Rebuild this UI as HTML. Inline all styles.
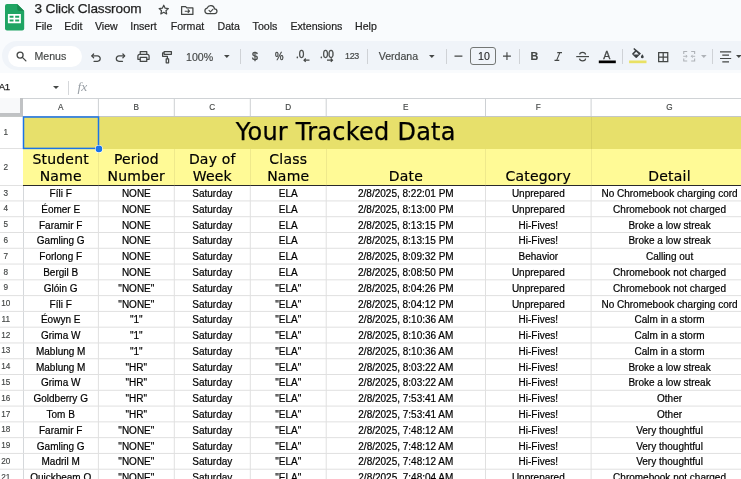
<!DOCTYPE html>
<html lang="en">
<head>
<meta charset="utf-8">
<title>3 Click Classroom</title>
<style>
*{box-sizing:border-box;margin:0;padding:0}
html,body{width:741px;height:479px;overflow:hidden;background:#f9fbfd}
body{will-change:transform}
body{position:relative;font-family:"Liberation Sans",Arial,sans-serif;color:#1f1f1f}
.abs{position:absolute}
#title{-webkit-text-stroke:0.25px #1f1f1f;position:absolute;left:34.5px;top:1px;font-size:13.6px;line-height:16px;color:#1f1f1f;white-space:nowrap;letter-spacing:-0.15px}
.menu{-webkit-text-stroke:0.2px #1f1f1f;position:absolute;top:19px;font-size:10.6px;line-height:14px;color:#1f1f1f;white-space:nowrap}
#tb{position:absolute;left:1.5px;top:41px;width:760px;height:29.4px;border-radius:14.7px;background:#f0f4f9}
#search{position:absolute;left:7.5px;top:45.5px;width:74.5px;height:21px;border-radius:10.5px;background:#fff}
.tt{-webkit-text-stroke:0.15px #444746;position:absolute;font-size:10.4px;line-height:12px;color:#444746;white-space:nowrap}
.md{-webkit-text-stroke:0.35px #444746}
.sep{position:absolute;top:48.5px;width:1px;height:15px;background:#cfd2d6}
svg{position:absolute;overflow:visible}
#fbar{position:absolute;left:0;top:72.5px;width:741px;height:26px;background:#fff}
#grid{position:absolute;left:0;top:98px;width:741px;height:381px;background:#fff}
.ch{-webkit-text-stroke:0.15px #444746;position:absolute;top:98.5px;height:17.5px;line-height:17.5px;text-align:center;font-size:8.2px;color:#444746}
.rn{-webkit-text-stroke:0.15px #444746;position:absolute;left:-6px;width:23.5px;text-align:center;font-size:8.2px;color:#444746}
.hl{position:absolute;left:0;width:741px;height:1px;background:#e1e1e1}
.vl{position:absolute;width:1px;background:#e1e1e1}
.c{-webkit-text-stroke:0.2px #000;position:absolute;height:15.78px;line-height:16.6px;text-align:center;font-size:10px;color:#000;white-space:nowrap;overflow:hidden}
.h2{-webkit-text-stroke:0.2px #000;position:absolute;font-family:"DejaVu Sans",Verdana,sans-serif;color:#000;text-align:center;font-size:14px;line-height:17px;white-space:nowrap;letter-spacing:0.2px}
</style>
</head>
<body>
<!-- logo -->
<svg style="left:4.6px;top:3.7px" width="19.2" height="26.4" viewBox="0 0 19.2 26.4">
  <path d="M2 0h10.2l7 7v17.4a2 2 0 0 1-2 2H2a2 2 0 0 1-2-2V2a2 2 0 0 1 2-2z" fill="#1fa463"/>
  <path d="M12.2 0l7 7h-5a2 2 0 0 1-2-2z" fill="#188a50"/>
  <path d="M3.2 10.4h13v9.3h-13z M4.9 12.1v2.1h3.9v-2.1z M10.500 12.100v2.100h4v-2.100z M4.900 15.900v2.100h3.900v-2.100z M10.500 15.900v2.100h4v-2.100z" fill="#fff" fill-rule="evenodd" transform="translate(-0.300,-0.400)"/>
</svg>
<div id="title">3 Click Classroom</div>
<!-- star -->
<svg style="left:157.5px;top:4.2px" width="11.5" height="11" viewBox="0 0 24 23" fill="none" stroke="#444746" stroke-width="2.5" stroke-linejoin="round">
  <path d="M12 2.5l2.9 6.3 6.8.7-5.1 4.6 1.5 6.7L12 17.3l-6.1 3.5 1.5-6.7L2.3 9.5l6.8-.7z"/>
</svg>
<!-- folder move -->
<svg style="left:181px;top:5.6px" width="12.5" height="9" viewBox="0 0 25 18" fill="none" stroke="#444746" stroke-width="2.5" stroke-linejoin="round">
  <path d="M1.2 1.2h8l2.4 2.6h12.2v13H1.2z"/>
  <path d="M7.5 10.4h9M13.6 6.9l3.4 3.5-3.4 3.5" stroke-width="2.3"/>
</svg>
<!-- cloud -->
<svg style="left:204px;top:5.4px" width="14" height="9.2" viewBox="0 0 28 18.4" fill="none" stroke="#444746" stroke-width="2.5" stroke-linejoin="round" stroke-linecap="round">
  <path d="M7 17.2a5.6 5.6 0 0 1-.6-11.1A7.6 7.6 0 0 1 21 7.6a4.8 4.8 0 0 1 .3 9.6z"/>
  <path d="M10 10.8l2.8 2.8 5-5" stroke-width="2.3"/>
</svg>
<div class="menu" style="left:35.3px">File</div>
<div class="menu" style="left:64.3px">Edit</div>
<div class="menu" style="left:95px">View</div>
<div class="menu" style="left:130.2px">Insert</div>
<div class="menu" style="left:170.7px">Format</div>
<div class="menu" style="left:217.5px">Data</div>
<div class="menu" style="left:252.6px">Tools</div>
<div class="menu" style="left:290.5px">Extensions</div>
<div class="menu" style="left:355px">Help</div>

<!-- toolbar -->
<div id="tb"></div>
<div id="search"></div>
<svg style="left:15.5px;top:50.5px" width="11" height="11" viewBox="0 0 22 22" fill="none" stroke="#444746" stroke-width="2.6" stroke-linecap="round">
  <circle cx="8.2" cy="8.2" r="6"/><path d="M12.8 12.8l7 7"/>
</svg>
<div class="tt" style="left:34.5px;top:50px;font-size:10.6px">Menus</div>
<!-- undo -->
<svg style="left:90.5px;top:52.5px" width="10.5" height="9" viewBox="0 0 21 18" fill="none" stroke="#444746" stroke-width="2.5" stroke-linecap="round" stroke-linejoin="round">
  <path d="M5.2 2L1.6 5.8l3.6 3.8"/><path d="M2 5.8h11a5.4 5.4 0 0 1 0 10.8H6"/>
</svg>
<!-- redo -->
<svg style="left:114.5px;top:52.5px" width="10.5" height="9" viewBox="0 0 21 18" fill="none" stroke="#444746" stroke-width="2.5" stroke-linecap="round" stroke-linejoin="round">
  <path d="M15.8 2l3.6 3.8-3.6 3.8"/><path d="M19 5.8H8a5.4 5.4 0 0 0 0 10.8h7"/>
</svg>
<!-- print -->
<svg style="left:137px;top:51.3px" width="13" height="11" viewBox="0 0 26 22" fill="none" stroke="#444746" stroke-width="2.5" stroke-linejoin="round">
  <path d="M6.5 6.5V1.2h13v5.3"/><path d="M6.5 16.5H1.8v-6.2a3.8 3.8 0 0 1 3.8-3.8h14.8a3.8 3.8 0 0 1 3.8 3.8v6.2h-4.7"/><path d="M6.5 12.6h13v8.2h-13z"/>
</svg>
<!-- paint roller -->
<svg style="left:161.5px;top:50.8px" width="11" height="12.5" viewBox="0 0 22 25" fill="none" stroke="#444746" stroke-width="2.5" stroke-linejoin="round">
  <path d="M4.2 1.2h14.6v5.4H4.2z"/><path d="M4.2 3.9H1.2v6.8h9.6v5.2"/><path d="M8.4 15.9h4.8v7.6H8.4z"/>
</svg>
<div class="tt" style="left:186px;top:50.5px;font-size:10.6px">100%</div>
<svg style="left:224px;top:55.2px" width="5.6" height="3" viewBox="0 0 10 5"><path d="M0 0h10L5 5z" fill="#444746"/></svg>
<div class="sep" style="left:239.8px"></div>
<div class="tt md" style="left:252px;top:50px;font-size:10.6px">$</div>
<div class="tt md" style="left:274.8px;top:51px;font-size:10.2px;transform:scaleX(.94);transform-origin:0 0">%</div>
<div class="tt md" style="left:296px;top:49px;font-size:10px">.0</div>
<svg style="left:302.7px;top:58.4px" width="6.5" height="4.4" viewBox="0 0 13 8.8" fill="none" stroke="#444746" stroke-width="2.3"><path d="M13 4.4H2M5.4 1L2 4.4l3.400 3.400"/></svg>
<div class="tt md" style="left:320px;top:49px;font-size:10px;letter-spacing:-0.1px">.00</div>
<svg style="left:326.5px;top:58.4px" width="6.5" height="4.4" viewBox="0 0 13 8.8" fill="none" stroke="#444746" stroke-width="2.3"><path d="M0 4.4h11M7.600 1L11 4.4 7.600 7.800"/></svg>
<div class="tt" style="left:344.5px;top:50.2px;font-size:9.9px;letter-spacing:-0.3px;transform:scaleX(.9);transform-origin:0 0;-webkit-text-stroke:0.2px #444746">123</div>
<div class="sep" style="left:366.7px"></div>
<div class="tt" style="left:378.7px;top:50px;font-size:10.6px">Verdana</div>
<svg style="left:429.4px;top:55.2px" width="5.6" height="3" viewBox="0 0 10 5"><path d="M0 0h10L5 5z" fill="#444746"/></svg>
<div class="sep" style="left:446.2px"></div>
<svg style="left:0;top:0" width="741" height="80" viewBox="0 0 741 80" stroke="#444746" stroke-width="1.150" fill="none"><path d="M454.500 56.100h7.900M503 56.100h7.900M506.950 52.150v7.900"/></svg>
<div class="abs" style="left:470.4px;top:47.2px;width:25.2px;height:17.4px;border:1px solid #747775;border-radius:3px"></div>
<div class="tt" style="left:478px;top:50px;font-size:10.6px;color:#1f1f1f">10</div>

<div class="sep" style="left:519.2px"></div>
<div class="tt" style="left:530.6px;top:50px;font-size:10.8px;font-weight:bold">B</div>
<!-- italic -->
<svg style="left:554px;top:51.8px" width="8.5" height="9" viewBox="0 0 17 18" fill="none" stroke="#444746" stroke-width="2.2"><path d="M6.500 1.200h9.500M1 16.800h9.500M11.800 1.200L5.200 16.800"/></svg>
<!-- strikethrough -->
<svg style="left:576px;top:51px" width="13" height="11" viewBox="0 0 13 11" fill="none" stroke="#444746" stroke-width="1.15"><path d="M0.200 5.600h12.800"/><path d="M9.600 3.600c-.2-1.400-1.400-2.300-3-2.300-1.700 0-2.900.9-2.900 2.200"/><path d="M3.500 7.600c.2 1.400 1.400 2.300 3.100 2.300 1.700 0 3-.9 3-2.300"/></svg>
<!-- text color -->
<div class="tt" style="left:603.2px;top:48.900px;font-size:10.6px;color:#444746;-webkit-text-stroke:0.3px #444746">A</div>
<svg style="left:0;top:0" width="741" height="80" viewBox="0 0 741 80"><rect x="598.800" y="60.500" width="17" height="2.700" fill="#000"/><rect x="629.100" y="60.500" width="17.400" height="2.700" fill="#e9e164"/></svg>
<div class="sep" style="left:622px"></div>
<!-- fill color -->
<svg style="left:632px;top:48.200px" width="12" height="10.500" viewBox="0 0 12 10.500">
  <path d="M2.200 0.100L1.300 1l1.700 1.700L0.400 5.300a.8.800 0 0 0 0 1.100l3.300 3.300a.8.800 0 0 0 1.100 0L9 5.500zM4.200 3.800l2.700 2.700H1.500z" fill="#3c4043" fill-rule="evenodd"/>
  <path d="M10.300 6.300s-1.400 1.600-1.400 2.600a1.400 1.400 0 0 0 2.800 0c0-1-1.400-2.600-1.400-2.600z" fill="#3c4043"/>
</svg>
<!-- borders -->
<svg style="left:658px;top:51.500px" width="10.400" height="10.300" viewBox="0 0 10.400 10.300" fill="none" stroke="#444746" stroke-width="1.250"><path d="M0.650 0.650h9.100v9H0.650zM5.200 0.650v9M0.650 5.150h9.100"/></svg>
<!-- merge (disabled) -->
<svg style="left:682.5px;top:51.3px" width="12.400" height="10.600" viewBox="0 0 24.800 21.200" fill="none" stroke="#aeb2b7" stroke-width="2.200"><path d="M8.400 1.100H1.500v5M16.400 1.100h6.900v5M8.400 20.100H1.500v-5M16.400 20.100h6.900v-5"/><path d="M0.500 10.600h7.500M5.500 7.800l2.800 2.800-2.800 2.800M24.300 10.600h-7.500M19.300 7.800l-2.800 2.800 2.800 2.800" stroke-width="1.900"/></svg>
<svg style="left:701.3px;top:55.2px" width="5.600" height="3" viewBox="0 0 10 5"><path d="M0 0h10L5 5z" fill="#aeb2b7"/></svg>
<div class="sep" style="left:712px"></div>
<!-- align center -->
<svg style="left:719.800px;top:51px" width="11.400" height="11" viewBox="0 0 11.400 11" fill="none" stroke="#444746" stroke-width="1.200"><path d="M0 0.900h11.200M2.300 4.200h6.700M0 7.500h11.200M2.300 10.800h6.700"/></svg>
<svg style="left:735.8px;top:55.2px" width="5.600" height="3" viewBox="0 0 10 5"><path d="M0 0h10L5 5z" fill="#444746"/></svg>

<!-- formula bar -->
<div id="fbar"></div>
<div class="abs" style="left:-1.2px;top:81px;font-size:9.6px;line-height:12px;color:#1f1f1f;letter-spacing:-0.5px;-webkit-text-stroke:0.25px #1f1f1f">A1</div>
<svg style="left:52.6px;top:86px" width="6" height="3.200" viewBox="0 0 10 5"><path d="M0 0h10L5 5z" fill="#444746"/></svg>
<div class="abs" style="left:68px;top:81px;width:1px;height:13.500px;background:#d5d7da"></div>
<div class="abs" style="left:77.5px;top:80.400px;font-family:'Liberation Serif',serif;font-style:italic;font-size:13.5px;line-height:13px;color:#9aa0a6;letter-spacing:0px">fx</div>

<!-- grid -->
<div id="grid"></div>
<div class="abs" style="left:0;top:98px;width:741px;height:1px;background:#d0d3d6"></div>
<div class="abs" style="left:0;top:115.500px;width:741px;height:1px;background:#c4c7c5"></div>
<!-- corner -->
<div class="abs" style="left:0;top:98px;width:23px;height:18.400px;background:#f8f9fa;border-right:3px solid #c0c2c4;border-bottom:3px solid #c0c2c4"></div>
<!-- row header separator line -->
<div class="abs" style="left:22.500px;top:117px;width:1px;height:362px;background:#d5d8db"></div>
<!-- row 1 -->
<div class="abs" style="left:23px;top:116.500px;width:718px;height:32px;background:#e7e06b"></div>
<div class="abs" style="left:590.600px;top:116.500px;width:1px;height:32px;background:#d9d263"></div>
<!-- row 2 -->
<div class="abs" style="left:23px;top:148.500px;width:718px;height:36.500px;background:#fffa96"></div>
<div class="abs" style="left:0;top:184.700px;width:741px;height:1.200px;background:#e1e1e1"></div>
<div class="abs" style="left:23px;top:184.700px;width:718px;height:1.200px;background:#2a2a2a"></div>
<div class="abs" style="left:0;top:148px;width:23px;height:1px;background:#e1e1e1"></div>

<div class="ch" style="left:23.0px;width:75.4px">A</div>
<div class="ch" style="left:98.4px;width:75.9px">B</div>
<div class="ch" style="left:174.3px;width:76.0px">C</div>
<div class="ch" style="left:250.3px;width:75.9px">D</div>
<div class="ch" style="left:326.2px;width:159.3px">E</div>
<div class="ch" style="left:485.5px;width:105.6px">F</div>
<div class="ch" style="left:591.1px;width:156.9px">G</div>
<svg style="left:0;top:0" width="741" height="479" viewBox="0 0 741 479" stroke="#cdd0d3" stroke-width="1" fill="none"><path d="M98.4 98.8V116"/><path d="M174.3 98.8V116"/><path d="M250.3 98.8V116"/><path d="M326.2 98.8V116"/><path d="M485.5 98.8V116"/><path d="M591.1 98.8V116"/></svg>
<div class="rn" style="top:116.50px;height:32.00px;line-height:32.00px">1</div>
<div class="rn" style="top:149.00px;height:37.00px;line-height:37.00px">2</div>
<div class="rn" style="top:185.65px;height:15.78px;line-height:15.78px">3</div>
<div class="rn" style="top:201.43px;height:15.78px;line-height:15.78px">4</div>
<div class="rn" style="top:217.21px;height:15.78px;line-height:15.78px">5</div>
<div class="rn" style="top:232.99px;height:15.78px;line-height:15.78px">6</div>
<div class="rn" style="top:248.77px;height:15.78px;line-height:15.78px">7</div>
<div class="rn" style="top:264.55px;height:15.78px;line-height:15.78px">8</div>
<div class="rn" style="top:280.33px;height:15.78px;line-height:15.78px">9</div>
<div class="rn" style="top:296.11px;height:15.78px;line-height:15.78px">10</div>
<div class="rn" style="top:311.89px;height:15.78px;line-height:15.78px">11</div>
<div class="rn" style="top:327.67px;height:15.78px;line-height:15.78px">12</div>
<div class="rn" style="top:343.45px;height:15.78px;line-height:15.78px">13</div>
<div class="rn" style="top:359.23px;height:15.78px;line-height:15.78px">14</div>
<div class="rn" style="top:375.01px;height:15.78px;line-height:15.78px">15</div>
<div class="rn" style="top:390.79px;height:15.78px;line-height:15.78px">16</div>
<div class="rn" style="top:406.57px;height:15.78px;line-height:15.78px">17</div>
<div class="rn" style="top:422.35px;height:15.78px;line-height:15.78px">18</div>
<div class="rn" style="top:438.13px;height:15.78px;line-height:15.78px">19</div>
<div class="rn" style="top:453.91px;height:15.78px;line-height:15.78px">20</div>
<div class="rn" style="top:469.69px;height:15.78px;line-height:15.78px">21</div>
<svg style="left:0;top:0" width="741" height="479" viewBox="0 0 741 479" stroke="#e0e0e0" stroke-width="1" fill="none"><path d="M0 200.93H741"/><path d="M0 216.71H741"/><path d="M0 232.49H741"/><path d="M0 248.27H741"/><path d="M0 264.05H741"/><path d="M0 279.83H741"/><path d="M0 295.61H741"/><path d="M0 311.39H741"/><path d="M0 327.17H741"/><path d="M0 342.95H741"/><path d="M0 358.73H741"/><path d="M0 374.51H741"/><path d="M0 390.29H741"/><path d="M0 406.07H741"/><path d="M0 421.85H741"/><path d="M0 437.63H741"/><path d="M0 453.41H741"/><path d="M0 469.19H741"/><path d="M0 484.97H741"/><path d="M98.4 185.8V479"/><path d="M174.3 185.8V479"/><path d="M250.3 185.8V479"/><path d="M326.2 185.8V479"/><path d="M485.5 185.8V479"/><path d="M591.1 185.8V479"/></svg>
<div class="c" style="left:23.0px;width:75.4px;top:186.05px">Fíli F</div>
<div class="c" style="left:98.4px;width:75.9px;top:186.05px">NONE</div>
<div class="c" style="left:174.3px;width:76.0px;top:186.05px">Saturday</div>
<div class="c" style="left:250.3px;width:75.9px;top:186.05px">ELA</div>
<div class="c" style="left:326.2px;width:159.3px;top:186.05px">2/8/2025, 8:22:01 PM</div>
<div class="c" style="left:485.5px;width:105.6px;top:186.05px">Unprepared</div>
<div class="c" style="left:591.1px;width:156.9px;top:186.05px">No Chromebook charging cord</div>
<div class="c" style="left:23.0px;width:75.4px;top:201.83px">Éomer E</div>
<div class="c" style="left:98.4px;width:75.9px;top:201.83px">NONE</div>
<div class="c" style="left:174.3px;width:76.0px;top:201.83px">Saturday</div>
<div class="c" style="left:250.3px;width:75.9px;top:201.83px">ELA</div>
<div class="c" style="left:326.2px;width:159.3px;top:201.83px">2/8/2025, 8:13:00 PM</div>
<div class="c" style="left:485.5px;width:105.6px;top:201.83px">Unprepared</div>
<div class="c" style="left:591.1px;width:156.9px;top:201.83px">Chromebook not charged</div>
<div class="c" style="left:23.0px;width:75.4px;top:217.61px">Faramir F</div>
<div class="c" style="left:98.4px;width:75.9px;top:217.61px">NONE</div>
<div class="c" style="left:174.3px;width:76.0px;top:217.61px">Saturday</div>
<div class="c" style="left:250.3px;width:75.9px;top:217.61px">ELA</div>
<div class="c" style="left:326.2px;width:159.3px;top:217.61px">2/8/2025, 8:13:15 PM</div>
<div class="c" style="left:485.5px;width:105.6px;top:217.61px">Hi-Fives!</div>
<div class="c" style="left:591.1px;width:156.9px;top:217.61px">Broke a low streak</div>
<div class="c" style="left:23.0px;width:75.4px;top:233.39px">Gamling G</div>
<div class="c" style="left:98.4px;width:75.9px;top:233.39px">NONE</div>
<div class="c" style="left:174.3px;width:76.0px;top:233.39px">Saturday</div>
<div class="c" style="left:250.3px;width:75.9px;top:233.39px">ELA</div>
<div class="c" style="left:326.2px;width:159.3px;top:233.39px">2/8/2025, 8:13:15 PM</div>
<div class="c" style="left:485.5px;width:105.6px;top:233.39px">Hi-Fives!</div>
<div class="c" style="left:591.1px;width:156.9px;top:233.39px">Broke a low streak</div>
<div class="c" style="left:23.0px;width:75.4px;top:249.17px">Forlong F</div>
<div class="c" style="left:98.4px;width:75.9px;top:249.17px">NONE</div>
<div class="c" style="left:174.3px;width:76.0px;top:249.17px">Saturday</div>
<div class="c" style="left:250.3px;width:75.9px;top:249.17px">ELA</div>
<div class="c" style="left:326.2px;width:159.3px;top:249.17px">2/8/2025, 8:09:32 PM</div>
<div class="c" style="left:485.5px;width:105.6px;top:249.17px">Behavior</div>
<div class="c" style="left:591.1px;width:156.9px;top:249.17px">Calling out</div>
<div class="c" style="left:23.0px;width:75.4px;top:264.95px">Bergil B</div>
<div class="c" style="left:98.4px;width:75.9px;top:264.95px">NONE</div>
<div class="c" style="left:174.3px;width:76.0px;top:264.95px">Saturday</div>
<div class="c" style="left:250.3px;width:75.9px;top:264.95px">ELA</div>
<div class="c" style="left:326.2px;width:159.3px;top:264.95px">2/8/2025, 8:08:50 PM</div>
<div class="c" style="left:485.5px;width:105.6px;top:264.95px">Unprepared</div>
<div class="c" style="left:591.1px;width:156.9px;top:264.95px">Chromebook not charged</div>
<div class="c" style="left:23.0px;width:75.4px;top:280.73px">Glóin G</div>
<div class="c" style="left:98.4px;width:75.9px;top:280.73px">"NONE"</div>
<div class="c" style="left:174.3px;width:76.0px;top:280.73px">Saturday</div>
<div class="c" style="left:250.3px;width:75.9px;top:280.73px">"ELA"</div>
<div class="c" style="left:326.2px;width:159.3px;top:280.73px">2/8/2025, 8:04:26 PM</div>
<div class="c" style="left:485.5px;width:105.6px;top:280.73px">Unprepared</div>
<div class="c" style="left:591.1px;width:156.9px;top:280.73px">Chromebook not charged</div>
<div class="c" style="left:23.0px;width:75.4px;top:296.51px">Fíli F</div>
<div class="c" style="left:98.4px;width:75.9px;top:296.51px">"NONE"</div>
<div class="c" style="left:174.3px;width:76.0px;top:296.51px">Saturday</div>
<div class="c" style="left:250.3px;width:75.9px;top:296.51px">"ELA"</div>
<div class="c" style="left:326.2px;width:159.3px;top:296.51px">2/8/2025, 8:04:12 PM</div>
<div class="c" style="left:485.5px;width:105.6px;top:296.51px">Unprepared</div>
<div class="c" style="left:591.1px;width:156.9px;top:296.51px">No Chromebook charging cord</div>
<div class="c" style="left:23.0px;width:75.4px;top:312.29px">Éowyn E</div>
<div class="c" style="left:98.4px;width:75.9px;top:312.29px">"1"</div>
<div class="c" style="left:174.3px;width:76.0px;top:312.29px">Saturday</div>
<div class="c" style="left:250.3px;width:75.9px;top:312.29px">"ELA"</div>
<div class="c" style="left:326.2px;width:159.3px;top:312.29px">2/8/2025, 8:10:36 AM</div>
<div class="c" style="left:485.5px;width:105.6px;top:312.29px">Hi-Fives!</div>
<div class="c" style="left:591.1px;width:156.9px;top:312.29px">Calm in a storm</div>
<div class="c" style="left:23.0px;width:75.4px;top:328.07px">Grima W</div>
<div class="c" style="left:98.4px;width:75.9px;top:328.07px">"1"</div>
<div class="c" style="left:174.3px;width:76.0px;top:328.07px">Saturday</div>
<div class="c" style="left:250.3px;width:75.9px;top:328.07px">"ELA"</div>
<div class="c" style="left:326.2px;width:159.3px;top:328.07px">2/8/2025, 8:10:36 AM</div>
<div class="c" style="left:485.5px;width:105.6px;top:328.07px">Hi-Fives!</div>
<div class="c" style="left:591.1px;width:156.9px;top:328.07px">Calm in a storm</div>
<div class="c" style="left:23.0px;width:75.4px;top:343.85px">Mablung M</div>
<div class="c" style="left:98.4px;width:75.9px;top:343.85px">"1"</div>
<div class="c" style="left:174.3px;width:76.0px;top:343.85px">Saturday</div>
<div class="c" style="left:250.3px;width:75.9px;top:343.85px">"ELA"</div>
<div class="c" style="left:326.2px;width:159.3px;top:343.85px">2/8/2025, 8:10:36 AM</div>
<div class="c" style="left:485.5px;width:105.6px;top:343.85px">Hi-Fives!</div>
<div class="c" style="left:591.1px;width:156.9px;top:343.85px">Calm in a storm</div>
<div class="c" style="left:23.0px;width:75.4px;top:359.63px">Mablung M</div>
<div class="c" style="left:98.4px;width:75.9px;top:359.63px">"HR"</div>
<div class="c" style="left:174.3px;width:76.0px;top:359.63px">Saturday</div>
<div class="c" style="left:250.3px;width:75.9px;top:359.63px">"ELA"</div>
<div class="c" style="left:326.2px;width:159.3px;top:359.63px">2/8/2025, 8:03:22 AM</div>
<div class="c" style="left:485.5px;width:105.6px;top:359.63px">Hi-Fives!</div>
<div class="c" style="left:591.1px;width:156.9px;top:359.63px">Broke a low streak</div>
<div class="c" style="left:23.0px;width:75.4px;top:375.41px">Grima W</div>
<div class="c" style="left:98.4px;width:75.9px;top:375.41px">"HR"</div>
<div class="c" style="left:174.3px;width:76.0px;top:375.41px">Saturday</div>
<div class="c" style="left:250.3px;width:75.9px;top:375.41px">"ELA"</div>
<div class="c" style="left:326.2px;width:159.3px;top:375.41px">2/8/2025, 8:03:22 AM</div>
<div class="c" style="left:485.5px;width:105.6px;top:375.41px">Hi-Fives!</div>
<div class="c" style="left:591.1px;width:156.9px;top:375.41px">Broke a low streak</div>
<div class="c" style="left:23.0px;width:75.4px;top:391.19px">Goldberry G</div>
<div class="c" style="left:98.4px;width:75.9px;top:391.19px">"HR"</div>
<div class="c" style="left:174.3px;width:76.0px;top:391.19px">Saturday</div>
<div class="c" style="left:250.3px;width:75.9px;top:391.19px">"ELA"</div>
<div class="c" style="left:326.2px;width:159.3px;top:391.19px">2/8/2025, 7:53:41 AM</div>
<div class="c" style="left:485.5px;width:105.6px;top:391.19px">Hi-Fives!</div>
<div class="c" style="left:591.1px;width:156.9px;top:391.19px">Other</div>
<div class="c" style="left:23.0px;width:75.4px;top:406.97px">Tom B</div>
<div class="c" style="left:98.4px;width:75.9px;top:406.97px">"HR"</div>
<div class="c" style="left:174.3px;width:76.0px;top:406.97px">Saturday</div>
<div class="c" style="left:250.3px;width:75.9px;top:406.97px">"ELA"</div>
<div class="c" style="left:326.2px;width:159.3px;top:406.97px">2/8/2025, 7:53:41 AM</div>
<div class="c" style="left:485.5px;width:105.6px;top:406.97px">Hi-Fives!</div>
<div class="c" style="left:591.1px;width:156.9px;top:406.97px">Other</div>
<div class="c" style="left:23.0px;width:75.4px;top:422.75px">Faramir F</div>
<div class="c" style="left:98.4px;width:75.9px;top:422.75px">"NONE"</div>
<div class="c" style="left:174.3px;width:76.0px;top:422.75px">Saturday</div>
<div class="c" style="left:250.3px;width:75.9px;top:422.75px">"ELA"</div>
<div class="c" style="left:326.2px;width:159.3px;top:422.75px">2/8/2025, 7:48:12 AM</div>
<div class="c" style="left:485.5px;width:105.6px;top:422.75px">Hi-Fives!</div>
<div class="c" style="left:591.1px;width:156.9px;top:422.75px">Very thoughtful</div>
<div class="c" style="left:23.0px;width:75.4px;top:438.53px">Gamling G</div>
<div class="c" style="left:98.4px;width:75.9px;top:438.53px">"NONE"</div>
<div class="c" style="left:174.3px;width:76.0px;top:438.53px">Saturday</div>
<div class="c" style="left:250.3px;width:75.9px;top:438.53px">"ELA"</div>
<div class="c" style="left:326.2px;width:159.3px;top:438.53px">2/8/2025, 7:48:12 AM</div>
<div class="c" style="left:485.5px;width:105.6px;top:438.53px">Hi-Fives!</div>
<div class="c" style="left:591.1px;width:156.9px;top:438.53px">Very thoughtful</div>
<div class="c" style="left:23.0px;width:75.4px;top:454.31px">Madril M</div>
<div class="c" style="left:98.4px;width:75.9px;top:454.31px">"NONE"</div>
<div class="c" style="left:174.3px;width:76.0px;top:454.31px">Saturday</div>
<div class="c" style="left:250.3px;width:75.9px;top:454.31px">"ELA"</div>
<div class="c" style="left:326.2px;width:159.3px;top:454.31px">2/8/2025, 7:48:12 AM</div>
<div class="c" style="left:485.5px;width:105.6px;top:454.31px">Hi-Fives!</div>
<div class="c" style="left:591.1px;width:156.9px;top:454.31px">Very thoughtful</div>
<div class="c" style="left:23.0px;width:75.4px;top:470.09px">Quickbeam Q</div>
<div class="c" style="left:98.4px;width:75.9px;top:470.09px">"NONE"</div>
<div class="c" style="left:174.3px;width:76.0px;top:470.09px">Saturday</div>
<div class="c" style="left:250.3px;width:75.9px;top:470.09px">"ELA"</div>
<div class="c" style="left:326.2px;width:159.3px;top:470.09px">2/8/2025, 7:48:04 AM</div>
<div class="c" style="left:485.5px;width:105.6px;top:470.09px">Unprepared</div>
<div class="c" style="left:591.1px;width:156.9px;top:470.09px">Chromebook not charged</div>
<!-- row2 col separators -->
<div class="vl" style="left:97.9px;top:149px;height:36px;background:#efe98c"></div>
<div class="vl" style="left:173.8px;top:149px;height:36px;background:#efe98c"></div>
<div class="vl" style="left:249.8px;top:149px;height:36px;background:#efe98c"></div>
<div class="vl" style="left:325.7px;top:149px;height:36px;background:#efe98c"></div>
<div class="vl" style="left:485px;top:149px;height:36px;background:#efe98c"></div>
<div class="vl" style="left:590.6px;top:149px;height:36px;background:#efe98c"></div>
<!-- title -->
<div class="abs" id="big" style="-webkit-text-stroke:0.25px #000;left:99.4px;width:492.7px;top:117.3px;height:31px;line-height:30px;text-align:center;font-family:'DejaVu Sans',Verdana,sans-serif;font-size:24px;letter-spacing:0.25px;color:#000;white-space:nowrap">Your Tracked Data</div>
<!-- row 2 headers -->
<div class="h2" style="left:23px;width:75.4px;top:150.8px">Student<br>Name</div>
<div class="h2" style="left:98.4px;width:75.9px;top:150.8px">Period<br>Number</div>
<div class="h2" style="left:174.3px;width:76px;top:150.8px">Day of<br>Week</div>
<div class="h2" style="left:250.3px;width:75.9px;top:150.8px">Class<br>Name</div>
<div class="h2" style="left:326.2px;width:159.3px;top:167.8px">Date</div>
<div class="h2" style="left:485.5px;width:105.6px;top:167.8px">Category</div>
<div class="h2" style="left:591.1px;width:156.9px;top:167.8px">Detail</div>
<!-- selection -->
<svg style="left:0;top:0" width="741" height="479" viewBox="0 0 741 479"><rect x="23.500" y="117" width="75" height="31.400" fill="none" stroke="#1a73e8" stroke-width="1.500"/><circle cx="98.900" cy="148.900" r="3.900" fill="#fff"/><circle cx="98.900" cy="148.900" r="3.300" fill="#1a73e8"/></svg>
</body>
</html>
